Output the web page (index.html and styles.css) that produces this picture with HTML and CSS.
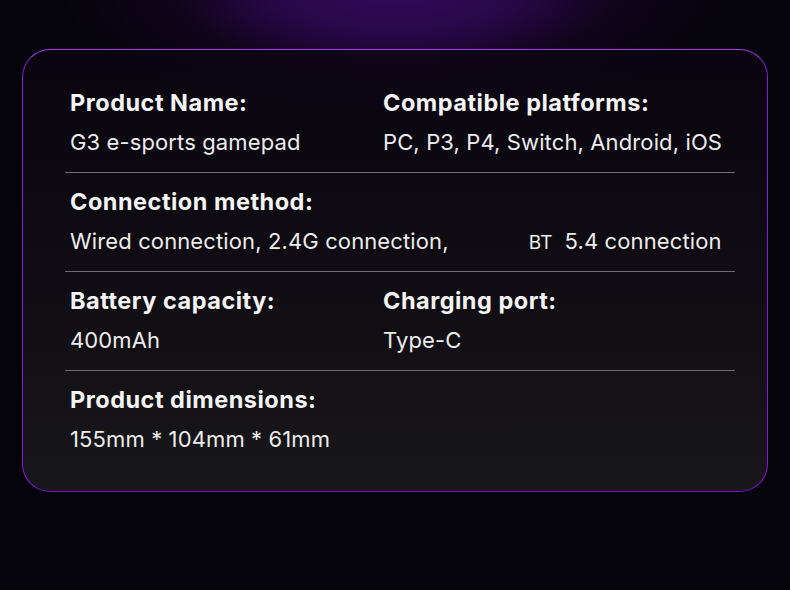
FILE: index.html
```html
<!DOCTYPE html>
<html>
<head>
<meta charset="utf-8">
<link rel="stylesheet" href="styles.css">
</head>
<body>
<div class="page">
  <div class="card">
    <div class="row">
      <div class="cell">
        <div class="label">Product Name:</div>
        <div class="value">G3 e-sports gamepad</div>
      </div>
      <div class="cell">
        <div class="label">Compatible platforms:</div>
        <div class="value">PC, P3, P4, Switch, Android, iOS</div>
      </div>
    </div>
    <div class="row">
      <div class="cell wide">
        <div class="label">Connection method:</div>
        <div class="value">Wired connection, 2.4G connection,<span class="bt">BT</span>5.4 connection</div>
      </div>
    </div>
    <div class="row">
      <div class="cell">
        <div class="label">Battery capacity:</div>
        <div class="value">400mAh</div>
      </div>
      <div class="cell">
        <div class="label">Charging port:</div>
        <div class="value">Type-C</div>
      </div>
    </div>
    <div class="row last">
      <div class="cell wide">
        <div class="label">Product dimensions:</div>
        <div class="value">155mm * 104mm * 61mm</div>
      </div>
    </div>
  </div>
</div>
</body>
</html>
```
FILE: styles.css
```css
html, body {
  margin: 0;
  padding: 0;
}
body {
  width: 790px;
  height: 590px;
  overflow: hidden;
  background-color: #05040a;
  background-image: radial-gradient(ellipse 340px 125px at 395px -10px, #33095a 0%, #2a0749 35%, rgba(24,5,40,0.6) 65%, rgba(5,4,10,0) 100%);
  font-family: Inter, "Noto Sans", sans-serif;
  color: #f2f2f2;
}
.page {
  padding: 49px 22px 0 22px;
}
.card {
  height: 443px;
  box-sizing: border-box;
  border: 1.5px solid #8a28e0;
  border-color: #a33af2 #8418e0 #7c0fd8 #8418e0;
  border-radius: 28px;
  background: linear-gradient(to bottom, rgba(12,5,18,0.7) 0%, rgba(14,11,18,0.95) 40%, #18171a 100%);
  padding: 23.5px 32px 0 42px;
}
.row {
  display: grid;
  grid-template-columns: 313px 1fr;
  padding: 14px 0 15px 5px;
  border-bottom: 1px solid #6e6c72;
}
.row.last {
  border-bottom: none;
}
.cell.wide {
  grid-column: 1 / 3;
}
.label {
  font-size: 23.5px;
  font-weight: 700;
  line-height: 30px;
  letter-spacing: 0.5px;
  color: #f4f4f4;
}
.value {
  margin-top: 9px;
  font-size: 22px;
  font-weight: 400;
  line-height: 30px;
  height: 30px;
  letter-spacing: 0.12px;
  color: #ececec;
  white-space: nowrap;
}
.bt {
  font-size: 19px;
  line-height: 1;
  margin-left: 80px;
  margin-right: 12px;
}
```
